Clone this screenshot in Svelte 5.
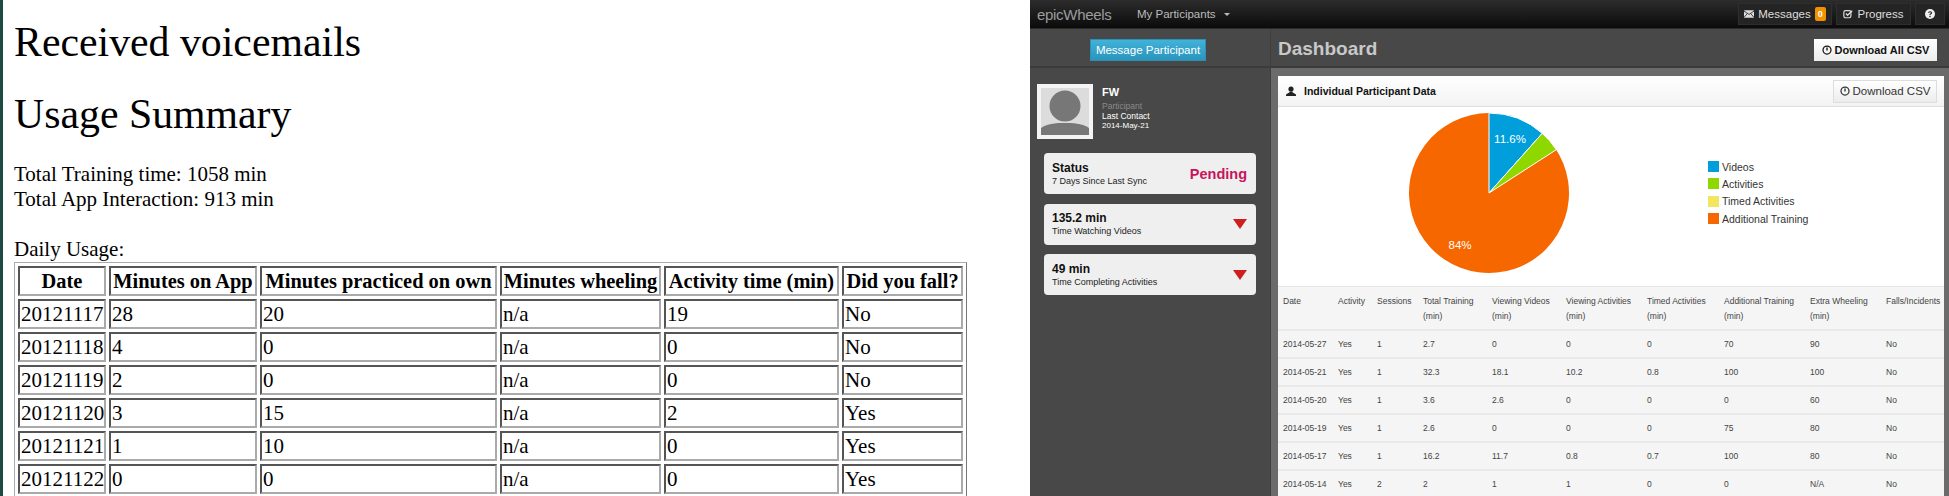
<script>
  const usageCols = [
    ['Date', 88],
    ['Minutes on App', 148],
    ['Minutes practiced on own', 237],
    ['Minutes wheeling', 161],
    ['Activity time (min)', 175],
    ['Did you fall?', 121],
  ]
  const usageRows = [
    ['20121117', '28', '20', 'n/a', '19', 'No'],
    ['20121118', '4', '0', 'n/a', '0', 'No'],
    ['20121119', '2', '0', 'n/a', '0', 'No'],
    ['20121120', '3', '15', 'n/a', '2', 'Yes'],
    ['20121121', '1', '10', 'n/a', '0', 'Yes'],
    ['20121122', '0', '0', 'n/a', '0', 'Yes'],
  ]

  const legend = [
    ['Videos', '#009fdb'],
    ['Activities', '#8ed800'],
    ['Timed Activities', '#f3e65e'],
    ['Additional Training', '#f76700'],
  ]

  const dataCols = [
    ['Date', '', 55],
    ['Activity', '', 39],
    ['Sessions', '', 46],
    ['Total Training', '(min)', 69],
    ['Viewing Videos', '(min)', 74],
    ['Viewing Activities', '(min)', 81],
    ['Timed Activities', '(min)', 77],
    ['Additional Training', '(min)', 86],
    ['Extra Wheeling', '(min)', 76],
    ['Falls/Incidents', '', 64],
  ]
  const dataRows = [
    ['2014-05-27', 'Yes', '1', '2.7', '0', '0', '0', '70', '90', 'No'],
    ['2014-05-21', 'Yes', '1', '32.3', '18.1', '10.2', '0.8', '100', '100', 'No'],
    ['2014-05-20', 'Yes', '1', '3.6', '2.6', '0', '0', '0', '60', 'No'],
    ['2014-05-19', 'Yes', '1', '2.6', '0', '0', '0', '75', '80', 'No'],
    ['2014-05-17', 'Yes', '1', '16.2', '11.7', '0.8', '0.7', '100', '80', 'No'],
    ['2014-05-14', 'Yes', '2', '2', '1', '1', '0', '0', 'N/A', 'No'],
  ]

  function point(pct) {
    const a = (pct / 100) * Math.PI * 2
    return `${(81 + 80 * Math.sin(a)).toFixed(2)} ${(81 - 80 * Math.cos(a)).toFixed(2)}`
  }
  function slice(from, to) {
    const large = to - from > 50 ? 1 : 0
    return `M81 81L${point(from)}A80 80 0 ${large} 1 ${point(to)}Z`
  }
</script>

{#snippet clock()}
  <svg class="clock" viewBox="0 0 12 12" width="10" height="10">
    <circle cx="6" cy="6" r="4.8" fill="none" stroke="currentColor" stroke-width="1.5" />
    <path d="M6 3v3.6" stroke="currentColor" stroke-width="1.6" fill="none" />
  </svg>
{/snippet}

<div class="page">
  <main class="plain">
    <h1>Received voicemails</h1>
    <h1>Usage Summary</h1>
    <p class="totals">Total Training time: 1058 min<br />Total App Interaction: 913 min</p>
    <p class="daily">Daily Usage:</p>
    <table class="usage">
      <colgroup>
        {#each usageCols as c}<col style="width:{c[1]}px" />{/each}
      </colgroup>
      <thead>
        <tr>{#each usageCols as c}<th>{c[0]}</th>{/each}</tr>
      </thead>
      <tbody>
        {#each usageRows as row}
          <tr>{#each row as v}<td>{v}</td>{/each}</tr>
        {/each}
      </tbody>
    </table>
  </main>

  <section class="app">
    <nav class="topbar">
      <span class="brand">epicWheels</span>
      <span class="menu">My Participants <i class="caret"></i></span>
      <div class="nav-right">
        <span class="nav-btn messages">
          <svg viewBox="0 0 12 9" width="10" height="8"><rect width="12" height="9" rx="1" fill="#ddd" /><path d="M0 1l6 4 6-4M0 8.5l4-4.5M12 8.5L8 4" stroke="#222" fill="none" /></svg>
          Messages <b class="badge">0</b>
        </span>
        <span class="nav-btn progress">
          <svg viewBox="0 0 12 12" width="10" height="10"><rect x="1" y="2" width="8.5" height="8.5" rx="2" fill="none" stroke="#ddd" stroke-width="1.4" /><path d="M3.5 5.5l2 2L11 2" fill="none" stroke="#ddd" stroke-width="1.6" /></svg>
          Progress
        </span>
        <span class="nav-btn help">
          <svg viewBox="0 0 12 12" width="10" height="10"><circle cx="6" cy="6" r="6" fill="#eee" /><path d="M4.2 4.6C4.3 2.8 7.9 2.8 7.9 4.6 7.9 5.9 6 5.7 6 7.2" fill="none" stroke="#222" stroke-width="1.4" /><rect x="5.2" y="8.2" width="1.6" height="1.6" fill="#222" /></svg>
        </span>
      </div>
    </nav>

    <div class="columns">
      <aside class="sidebar">
        <div class="side-head"><button class="msg">Message Participant</button></div>
        <div class="profile">
          <div class="avatar">
            <svg viewBox="0 0 48 47" width="48" height="47">
              <rect width="48" height="47" fill="#dcdcdc" />
              <circle cx="24" cy="18" r="15.5" fill="#777" />
              <path d="M0 47V40C8 35 16 35 24 35S40 35 48 40V47Z" fill="#777" />
            </svg>
          </div>
          <div class="who">
            <strong>FW</strong>
            <span class="role">Participant</span>
            <span>Last Contact</span>
            <span class="date">2014-May-21</span>
          </div>
        </div>
        <div class="stat">
          <div><b>Status</b><small>7 Days Since Last Sync</small></div>
          <span class="pending">Pending</span>
        </div>
        <div class="stat">
          <div><b>135.2 min</b><small>Time Watching Videos</small></div>
          <i class="down"></i>
        </div>
        <div class="stat">
          <div><b>49 min</b><small>Time Completing Activities</small></div>
          <i class="down"></i>
        </div>
      </aside>

      <div class="content">
        <header class="content-head">
          <h2>Dashboard</h2>
          <button class="dl strong">{@render clock()} Download All CSV</button>
        </header>
        <div class="well">
          <article class="card">
            <div class="card-head">
              <svg viewBox="0 0 10 10" width="10" height="10"><circle cx="5" cy="3" r="2.6" fill="#222" /><path d="M0 10V8.6C1.5 7 3.5 7 3.8 5.5H6.2C6.5 7 8.5 7 10 8.6V10Z" fill="#222" /></svg>
              <span class="card-title">Individual Participant Data</span>
              <button class="dl">{@render clock()} Download CSV</button>
            </div>
            <div class="chart">
              <div class="pie">
                <svg viewBox="0 0 162 162" width="162" height="162">
                  <path d={slice(11.6, 100)} fill="#f76700" />
                  <path d={slice(0, 11.6)} fill="#009fdb" stroke="#fff" stroke-width="1" />
                  <path d={slice(11.6, 15.9)} fill="#8ed800" stroke="#fff" stroke-width="1" />
                  <text x="102" y="31" text-anchor="middle">11.6%</text>
                  <text x="52" y="137" text-anchor="middle">84%</text>
                </svg>
              </div>
              <ul class="legend">
                {#each legend as [label, color]}
                  <li><i style="background:{color}"></i>{label}</li>
                {/each}
              </ul>
            </div>
            <table class="data">
              <colgroup>
                {#each dataCols as c}<col style="width:{c[2]}px" />{/each}
              </colgroup>
              <thead>
                <tr>
                  {#each dataCols as c}
                    <th>{c[0]}{#if c[1]}<br />{c[1]}{/if}</th>
                  {/each}
                </tr>
              </thead>
              <tbody>
                {#each dataRows as row}
                  <tr>{#each row as v}<td>{v}</td>{/each}</tr>
                {/each}
              </tbody>
            </table>
          </article>
        </div>
      </div>
    </div>
  </section>
</div>

<style>
  :global(body) {
    margin: 0;
    background: #fff;
  }
  .page {
    display: flex;
    width: 1949px;
    height: 496px;
    overflow: hidden;
  }

  /* left half: unstyled html report */
  .plain {
    width: 1030px;
    flex: none;
    box-sizing: border-box;
    padding: 0 0 0 11px;
    border-left: 3px solid #1d4a42;
    font: 21px/25px 'Liberation Serif', serif;
    color: #000;
    background: #fff;
  }
  h1 {
    margin: 0;
    font-size: 41.8px;
    font-weight: 400;
    line-height: 46px;
    padding-top: 19px;
    padding-bottom: 7px;
  }
  .totals {
    margin: 18px 0 0;
  }
  .daily {
    margin: 25px 0 0;
  }
  .usage {
    width: 953px;
    box-sizing: border-box;
    border-collapse: separate;
    border-spacing: 3px;
    border: 1px solid;
    border-color: #aaa #777 #777 #aaa;
    table-layout: fixed;
  }
  .usage th,
  .usage td {
    box-sizing: border-box;
    height: 30px;
    padding: 0 1px;
    border: 2px solid;
    border-color: #555 #aaa #aaa #555;
    text-align: left;
    white-space: nowrap;
    overflow: hidden;
  }
  .usage th {
    text-align: center;
    font-size: 20.4px;
    font-weight: 700;
  }

  /* right half: dashboard screenshot */
  .app {
    flex: 1;
    display: flex;
    flex-direction: column;
    min-width: 0;
    font-family: 'Liberation Sans', sans-serif;
    background: #484848;
  }
  .topbar {
    flex: none;
    height: 29px;
    box-sizing: border-box;
    display: flex;
    align-items: center;
    padding: 0 4px 0 7px;
    background: linear-gradient(#2c2c2c, #0b0b0b);
    border-bottom: 1px solid #2a2a2a;
  }
  .brand {
    width: 100px;
    color: #9c9c9c;
    font-size: 15px;
    font-weight: 400;
    letter-spacing: -0.3px;
  }
  .menu {
    color: #bbb;
    font-size: 11.5px;
  }
  .caret {
    display: inline-block;
    margin-left: 5px;
    vertical-align: 2px;
    border: 3px solid transparent;
    border-top-color: #bbb;
    border-bottom: 0;
  }
  .nav-right {
    margin-left: auto;
    display: flex;
    gap: 4px;
  }
  .nav-btn {
    height: 22px;
    box-sizing: border-box;
    display: flex;
    align-items: center;
    justify-content: center;
    gap: 4px;
    background: #242424;
    border: 1px solid #2e2e2e;
    color: #ddd;
    font-size: 11.5px;
  }
  .nav-btn.messages {
    width: 94px;
  }
  .nav-btn.progress {
    width: 75px;
  }
  .nav-btn.help {
    width: 30px;
  }
  .badge {
    width: 11px;
    height: 14px;
    line-height: 14px;
    text-align: center;
    border-radius: 2px;
    background: #f29100;
    color: #fff;
    font-size: 9px;
  }

  .columns {
    flex: 1;
    display: flex;
    min-height: 0;
  }
  .sidebar {
    flex: none;
    width: 240px;
    background: #484848;
  }
  .side-head {
    height: 39px;
    display: flex;
    align-items: center;
    justify-content: center;
    border-bottom: 2px solid #3b3b3b;
    box-sizing: border-box;
    padding: 5px 4px 0 0;
  }
  .msg {
    width: 116px;
    height: 22px;
    padding: 0;
    border: 1px solid #2c8fb3;
    background: linear-gradient(#41b2d8, #2a95bd);
    color: #fff;
    font: 11.5px 'Liberation Sans', sans-serif;
  }
  .profile {
    display: flex;
    gap: 9px;
    padding: 16px 0 14px 7px;
  }
  .avatar {
    width: 48px;
    height: 47px;
    border: 4px solid #f4f4f4;
  }
  .avatar svg {
    display: block;
  }
  .who {
    display: flex;
    flex-direction: column;
    color: #fff;
    font-size: 8.5px;
    line-height: 10px;
  }
  .who strong {
    font-size: 11px;
    line-height: 13px;
    margin: 2px 0 2px;
  }
  .role {
    color: #8a8a8a;
  }
  .who .date {
    font-size: 8px;
  }
  .stat {
    margin: 0 14px 9.5px;
    height: 41px;
    box-sizing: border-box;
    padding: 0 9px 0 8px;
    display: flex;
    align-items: center;
    justify-content: space-between;
    background: #efefef;
    border-radius: 4px;
    color: #111;
  }
  .stat b {
    display: block;
    font-size: 12px;
    line-height: 14px;
  }
  .stat small {
    display: block;
    font-size: 9px;
    line-height: 12px;
    color: #222;
  }
  .pending {
    color: #c8145a;
    font-size: 14.5px;
    font-weight: 700;
  }
  .down {
    border-style: solid;
    border-width: 10px 7px 0;
    border-color: #cc2020 transparent transparent;
  }

  .content {
    flex: 1;
    min-width: 0;
    display: flex;
    flex-direction: column;
    border-left: 1px solid #3f3f3f;
  }
  .content-head {
    flex: none;
    height: 39px;
    box-sizing: border-box;
    display: flex;
    align-items: center;
    justify-content: space-between;
    padding: 3px 12px 0 7px;
    border-bottom: 2px solid #3b3b3b;
  }
  h2 {
    margin: 0;
    color: #c8c8c8;
    font-size: 19px;
    font-weight: 700;
  }
  .dl {
    display: inline-flex;
    align-items: center;
    justify-content: center;
    gap: 3px;
    height: 23px;
    width: 104px;
    padding: 0;
    border: 1px solid #ddd;
    background: linear-gradient(#fff, #ececec);
    color: #333;
    font: 11.5px 'Liberation Sans', sans-serif;
  }
  .dl.strong {
    width: 123px;
    height: 22px;
    margin-top: 2px;
    border: 0;
    color: #111;
    font-weight: 700;
    font-size: 11px;
  }
  .well {
    flex: 1;
    min-height: 0;
    padding: 8px 5px 0 7px;
    background: #6b6b6b;
  }
  .card {
    height: 100%;
    background: #fff;
    overflow: hidden;
  }
  .card-head {
    height: 31px;
    box-sizing: border-box;
    display: flex;
    align-items: center;
    padding: 0 7px 0 8px;
    background: linear-gradient(#fff, #f3f3f3);
    border-bottom: 1px solid #ddd;
  }
  .card-title {
    margin-left: 8px;
    color: #111;
    font-size: 10.5px;
    font-weight: 700;
  }
  .card-head .dl {
    margin-left: auto;
  }
  .chart {
    height: 180px;
    display: flex;
    align-items: flex-start;
    padding: 5px 0 0 130px;
    box-sizing: border-box;
    border-bottom: 1px solid #e6e6e6;
  }
  .pie {
    width: 162px;
    height: 162px;
    flex: none;
  }
  .pie svg {
    display: block;
  }
  .pie text {
    fill: #fff;
    font-size: 11.5px;
  }
  .legend {
    list-style: none;
    margin: 46px 0 0 138px;
    padding: 0;
    font-size: 10.5px;
    color: #333;
  }
  .legend li {
    display: flex;
    align-items: center;
    height: 17.3px;
    gap: 3px;
    white-space: nowrap;
  }
  .legend i {
    width: 11px;
    height: 11px;
  }
  .data {
    width: 100%;
    table-layout: fixed;
    border-collapse: separate;
    border-spacing: 0;
    background: #f5f5f5;
    color: #444;
    font-size: 8.5px;
  }
  .data th,
  .data td {
    box-sizing: border-box;
    padding: 0 0 0 5px;
    text-align: left;
    font-weight: 400;
    white-space: nowrap;
    vertical-align: middle;
  }
  .data th {
    height: 42px;
    line-height: 15px;
    vertical-align: top;
    padding-top: 7px;
  }
  .data td {
    height: 28px;
    border-top: 2px solid #e8e8e8;
  }
</style>
